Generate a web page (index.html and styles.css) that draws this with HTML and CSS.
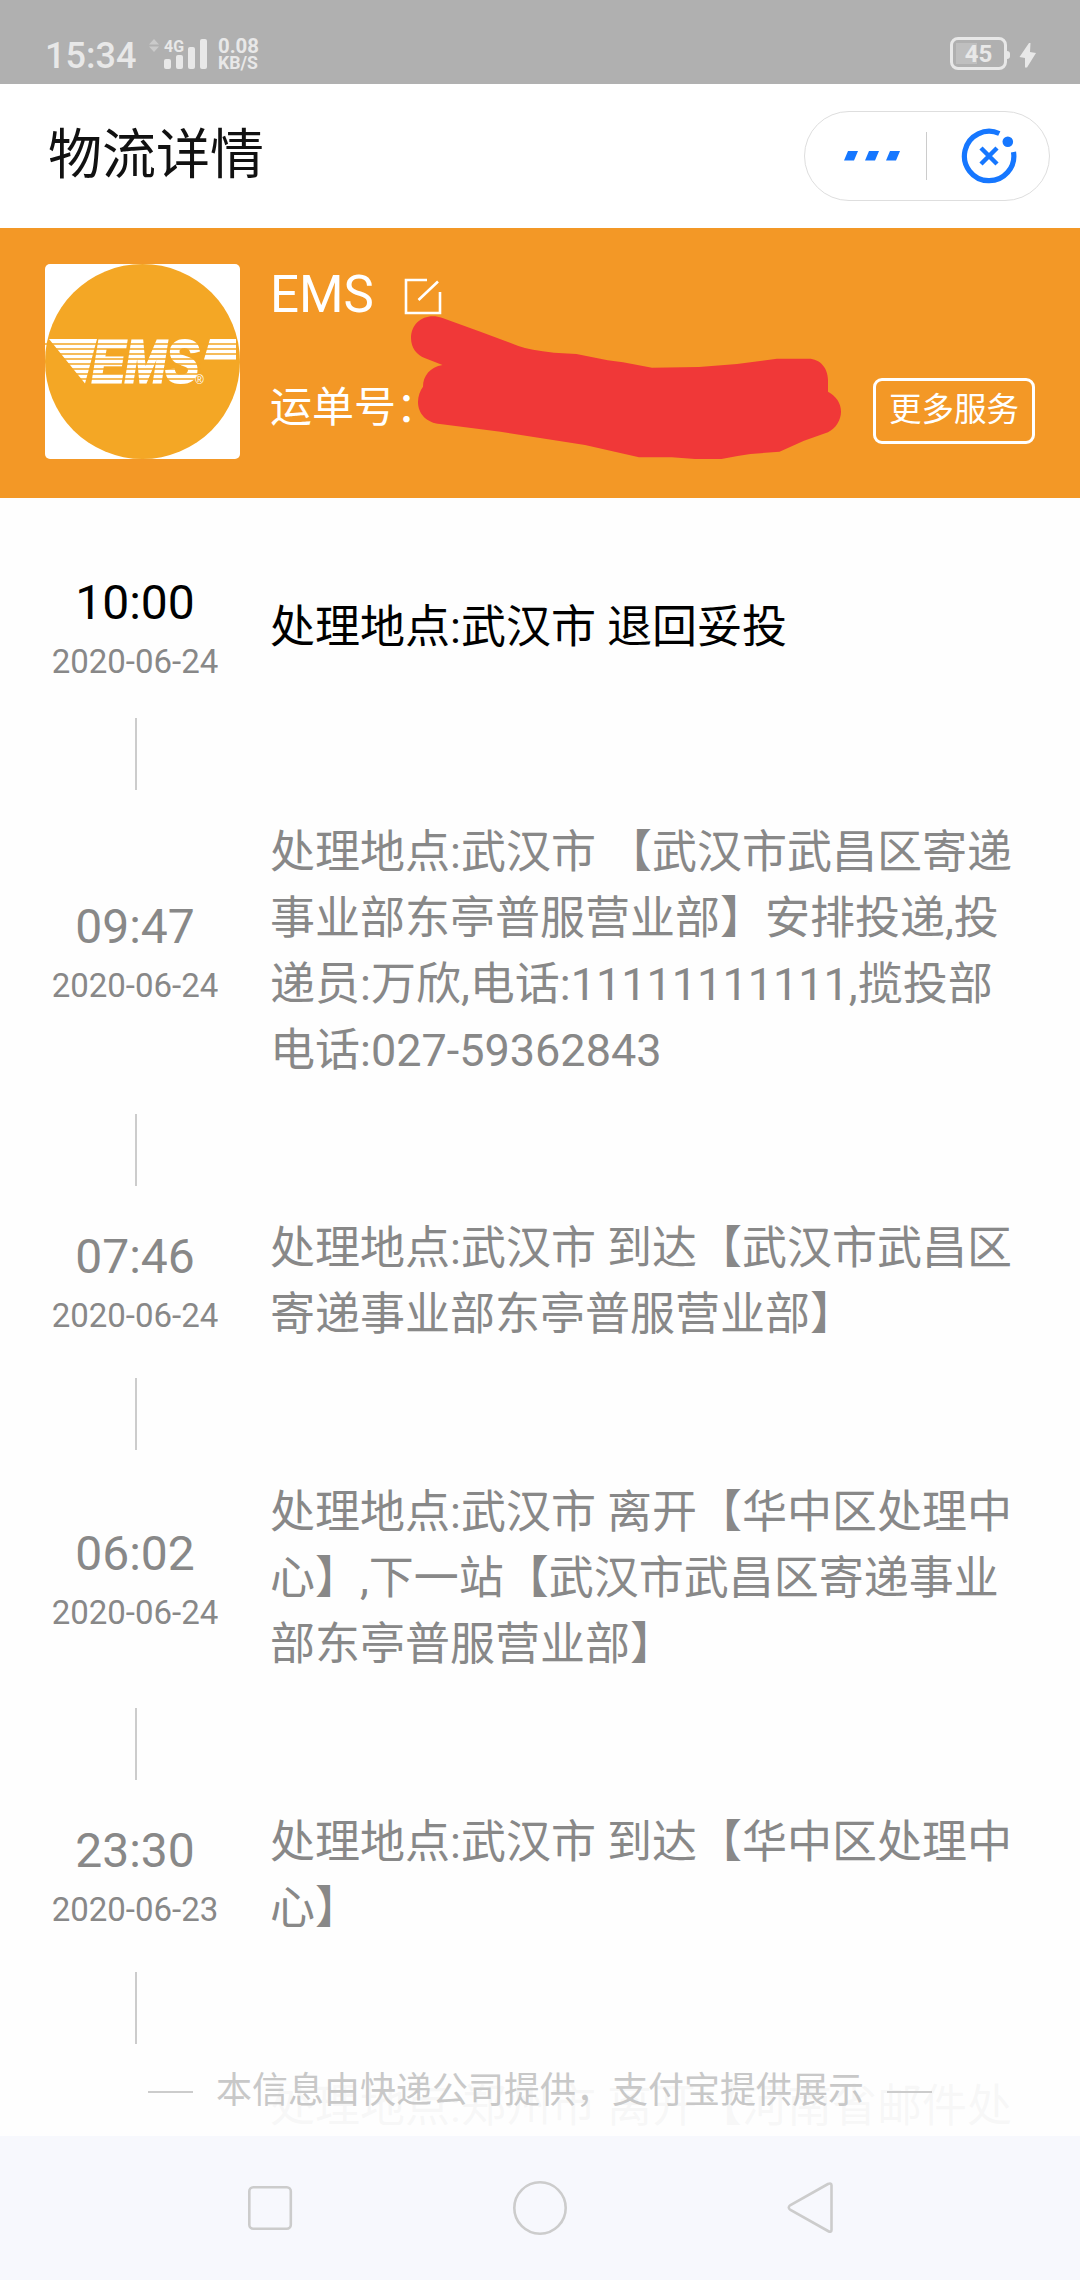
FILE: index.html
```html
<!DOCTYPE html>
<html lang="zh-CN">
  <head>
    <meta charset="UTF-8" />
    <meta name="viewport" content="width=device-width, initial-scale=1.0" />
    <title>物流详情</title>
    <link rel="stylesheet" href="styles.css">
  </head>
  <body>
    <div class="status-bar">
      <span class="clock">15:34</span>
      <svg class="signal" width="60" height="36" viewBox="0 0 60 36">
        <path d="M0 7.500 L5 2 L10 7.500 Z M0 9.500 L5 15 L10 9.500 Z" fill="#cacaca" />
        <text x="15" y="14.500" textLength="20" lengthAdjust="spacingAndGlyphs">4G</text>
        <rect x="15" y="22" width="7" height="10" rx="2" />
        <rect x="27" y="18" width="7" height="14" rx="2" />
        <rect x="39" y="10" width="7" height="22" rx="2" />
        <rect x="51" y="2" width="7" height="30" rx="2" />
      </svg>
      <svg class="speed" width="42" height="36" viewBox="0 0 42 36">
        <text x="0" y="16" font-size="21" textLength="41" lengthAdjust="spacingAndGlyphs">0.08</text>
        <text x="0" y="32" font-size="18" textLength="40" lengthAdjust="spacingAndGlyphs">KB/S</text>
      </svg>
      <div class="battery"><span>45</span></div>
      <svg class="bolt" width="17" height="25" viewBox="0 0 17 25">
        <path d="M10 0 L0.500 14 L6 15 L6 24.500 L8 24.500 L17 10 L11 9 L11.500 0 Z" />
      </svg>
    </div>

    <div class="title-bar">
      <h1>物流详情</h1>
      <div class="capsule">
        <svg class="capsule-more" width="56" height="10" viewBox="0 0 56 10">
          <path d="M4 0 h10 l-4 9.500 h-10 z M25 0 h10 l-4 9.500 h-10 z M46 0 h10 l-4 9.500 h-10 z" />
        </svg>
        <span class="capsule-line"></span>
        <svg class="capsule-close" width="56" height="56" viewBox="0 0 56 56">
          <path d="M38.300 5.500 A24.700 24.700 0 1 0 52.500 24" />
          <path d="M20 20 L36 36 M36 20 L20 36" stroke-width="4.500" />
          <circle cx="46.800" cy="13.800" r="5.300" />
        </svg>
      </div>
    </div>

    <div class="company">
      <svg class="logo" width="195" height="195" viewBox="0 0 195 195">
        <rect width="195" height="195" fill="#fff" />
        <circle cx="97.500" cy="97.500" r="97.500" fill="#f4a725" />
        <path d="M4 75 H52 L40 119.500 Z" fill="#fff" />
        <text x="47" y="118" textLength="107" lengthAdjust="spacingAndGlyphs">EMS</text>
        <path d="M165 75 H191 V95.500 H159 Z" fill="#fff" />
        <path d="M0 80 H193 M10 85 H193 M14 90 H193 M18 95 H156 M22 100 H156 M26 105 H156 M30 110 H156 M34 115 H150" stroke="#f4a725" stroke-width="1.300" />
        <text class="logo-mark" x="150" y="120">®</text>
      </svg>
      <div class="company-info">
        <div class="company-name">
          <span>EMS</span>
          <svg width="38" height="38" viewBox="0 0 38 38">
            <path d="M23 2 H2 V35 H36 V14 M14.500 22 L34 3.500" />
          </svg>
        </div>
        <div class="waybill">运单号：</div>
      </div>
      <button class="more-service">更多服务</button>
      <svg class="scribble" width="432" height="145" viewBox="410 315 432 145">
        <path d="M442.500 318 C426 312 411 322 411 338 C411 348 417 355 424.600 358 L442.500 365 C430 367 423 376 423 386.700 C420 391 418 396 418 402 C418 414 427 423 440 424 L500.500 431.700 L585 445 L639 457.300 L672 457.300 L695 459 L721.500 459 Q736 456 750.500 454 L779.500 451.700 L804 440.700 L828 432.300 C836 428 841 420 841 411.700 C841 403 836 396 828 391.700 L828 380 C828 368 820 358.700 808.600 358.700 L777 358.700 L737 364 L699 367 L652 367.700 L623 362.300 L607.700 360.300 L576.400 354 L554 352.700 Q530 350 518.400 346 L480.400 331.700 Z" />
      </svg>
    </div>

    <div class="track">
      <div class="item current">
        <div class="when"><b>10:00</b><span>2020-06-24</span></div>
        <p>处理地点:武汉市 退回妥投</p>
      </div>
      <div class="item">
        <div class="when"><b>09:47</b><span>2020-06-24</span></div>
        <p>处理地点:武汉市 【武汉市武昌区寄递事业部东亭普服营业部】安排投递,投递员:万欣,电话:11111111111,揽投部电话:027-59362843</p>
      </div>
      <div class="item">
        <div class="when"><b>07:46</b><span>2020-06-24</span></div>
        <p>处理地点:武汉市 到达【武汉市武昌区寄递事业部东亭普服营业部】</p>
      </div>
      <div class="item">
        <div class="when"><b>06:02</b><span>2020-06-24</span></div>
        <p>处理地点:武汉市 离开【华中区处理中心】,下一站【武汉市武昌区寄递事业部东亭普服营业部】</p>
      </div>
      <div class="item">
        <div class="when"><b>23:30</b><span>2020-06-23</span></div>
        <p>处理地点:武汉市 到达【华中区处理中心】</p>
      </div>
      <div class="item next">
        <div class="when"></div>
        <p>处理地点:郑州市 离开【河南省邮件处</p>
      </div>
      <div class="source"><span>本信息由快递公司提供，支付宝提供展示</span></div>
    </div>

    <div class="nav-bar">
      <svg width="56" height="56" viewBox="0 0 56 56">
        <rect x="7.300" y="7.300" width="41.500" height="41.500" rx="4" />
      </svg>
      <svg width="56" height="56" viewBox="0 0 56 56">
        <circle cx="28" cy="28" r="25.700" />
      </svg>
      <svg width="56" height="56" viewBox="0 0 56 56">
        <path d="M46 4 L8.500 25 Q5 27.500 8.500 30 L46 51 Q49.500 53 49.500 50 V5.500 Q49.500 2.500 46 4 Z" />
      </svg>
    </div>
  </body>
</html>
```
FILE: styles.css
```css
* {
  box-sizing: border-box;
}

body {
  margin: 0;
  width: 1080px;
  height: 2280px;
  display: flex;
  flex-direction: column;
  overflow: hidden;
  background-color: #fefefe;
  font-family: Roboto, "Noto Sans CJK SC", sans-serif;
  text-spacing-trim: space-all;
}

svg {
  display: block;
  flex-shrink: 0;
}

/* Phone status bar */
.status-bar {
  height: 84px;
  flex-shrink: 0;
  display: flex;
  align-items: flex-start;
  padding: 37px 44px 0 45px;
  background-color: #b0b0b0;
  color: #e8e8e8;
  fill: #e8e8e8;
  font-weight: 500;
}

.clock {
  width: 104px;
  font-size: 36px;
  line-height: 38px;
}

.signal text {
  font-size: 17px;
  font-weight: 700;
}

.speed {
  margin-left: 9px;
  font-weight: 700;
}

.battery {
  width: 57px;
  height: 33px;
  margin-left: auto;
  border: 3px solid #e8e8e8;
  border-radius: 8px;
  background: linear-gradient(#bfbfbf, #bfbfbf) 3px 3px / 21px 21px no-repeat;
  text-align: center;
  font-size: 24px;
  font-weight: 700;
  line-height: 29px;
}

/* Battery tip */
.battery::after {
  content: "";
  display: block;
  width: 3px;
  height: 8px;
  margin: -18px -6px 0 auto;
  border-radius: 0 3px 3px 0;
  background-color: #e8e8e8;
}

.bolt {
  margin: 6px 0 0 12px;
}

/* Title bar */
.title-bar {
  height: 144px;
  flex-shrink: 0;
  display: flex;
  align-items: center;
  justify-content: space-between;
  padding: 0 30px 0 48px;
  background-color: #fff;
}

h1 {
  margin: 0;
  font-size: 54px;
  font-weight: 400;
  line-height: 80px;
  color: #111;
}

.capsule {
  width: 246px;
  height: 90px;
  display: flex;
  align-items: center;
  padding-left: 39px;
  border: 1px solid #dedede;
  border-radius: 45px;
}

.capsule-more {
  fill: #1677ff;
}

.capsule-line {
  width: 1px;
  height: 48px;
  margin: 0 34px 0 26px;
  background-color: #ccc;
}

.capsule-close {
  fill: none;
  stroke: #1677ff;
  stroke-width: 5.2;
}

.capsule-close circle {
  fill: #1677ff;
  stroke: none;
}

/* Courier banner */
.company {
  height: 270px;
  flex-shrink: 0;
  display: flex;
  position: relative;
  padding: 36px 45px 0;
  background-color: #f39826;
  color: #fff;
}

.logo {
  border-radius: 5px;
}

.logo text {
  font-family: "Liberation Sans", sans-serif;
  font-size: 59px;
  font-weight: 700;
  font-style: italic;
  fill: #fff;
  stroke: #fff;
  stroke-width: 3;
}

.logo .logo-mark {
  font-size: 12px;
  font-weight: 400;
  font-style: normal;
  stroke: none;
}

.company-info {
  margin-left: 30px;
}

.company-name {
  display: flex;
  align-items: center;
  gap: 30px;
  height: 60px;
  font-size: 51px;
}

.company-name svg {
  margin-top: 6px;
  fill: none;
  stroke: #fff;
  stroke-width: 2.6;
}

.waybill {
  margin-top: 54px;
  font-size: 42px;
  line-height: 60px;
}

.more-service {
  width: 162px;
  height: 66px;
  margin: 114px 0 0 auto;
  padding: 0 0 10px;
  border: 3px solid #fff;
  border-radius: 9px;
  background: none;
  color: #fff;
  font-family: inherit;
  font-size: 32.5px;
}

/* Covers the waybill number */
.scribble {
  position: absolute;
  left: 410px;
  top: 87px;
  fill: #f03838;
}

/* Tracking list */
.track {
  flex: 1;
  position: relative;
  overflow: hidden;
  padding-top: 70px;
}

.item {
  display: flex;
  align-items: center;
  color: #888;
}

/* Connector between two steps */
.item + .item {
  padding-top: 132px;
  background: linear-gradient(#ccc, #ccc) 135px 30px / 2px 72px no-repeat;
}

.current {
  color: #000;
}

.next {
  align-items: flex-start;
}

.when {
  width: 270px;
  min-height: 120px;
  display: flex;
  flex-direction: column;
  align-items: center;
}

.when b {
  font-size: 48px;
  font-weight: 400;
  line-height: 70px;
}

.when span {
  font-size: 33px;
  line-height: 48px;
  color: #888;
}

.item p {
  width: 758px;
  margin: 0;
  font-size: 45px;
  line-height: 66px;
}

/* Fades out the list under the source note */
.source {
  position: absolute;
  left: 0;
  right: 0;
  bottom: 0;
  height: 90px;
  display: flex;
  justify-content: center;
  align-items: flex-start;
  background-color: rgba(254, 254, 254, 0.94);
  color: #c8c8c8;
  font-size: 36px;
  line-height: 91px;
}

.source::before,
.source::after {
  content: "";
  width: 45px;
  height: 2px;
  margin: 45px 23px 0;
  background-color: #ccc;
}

/* Phone navigation keys */
.nav-bar {
  height: 144px;
  flex-shrink: 0;
  display: flex;
  justify-content: center;
  align-items: center;
  gap: 214px;
  background-color: #f7f8fd;
  fill: none;
  stroke: #ccc;
  stroke-width: 2.6;
}
```
